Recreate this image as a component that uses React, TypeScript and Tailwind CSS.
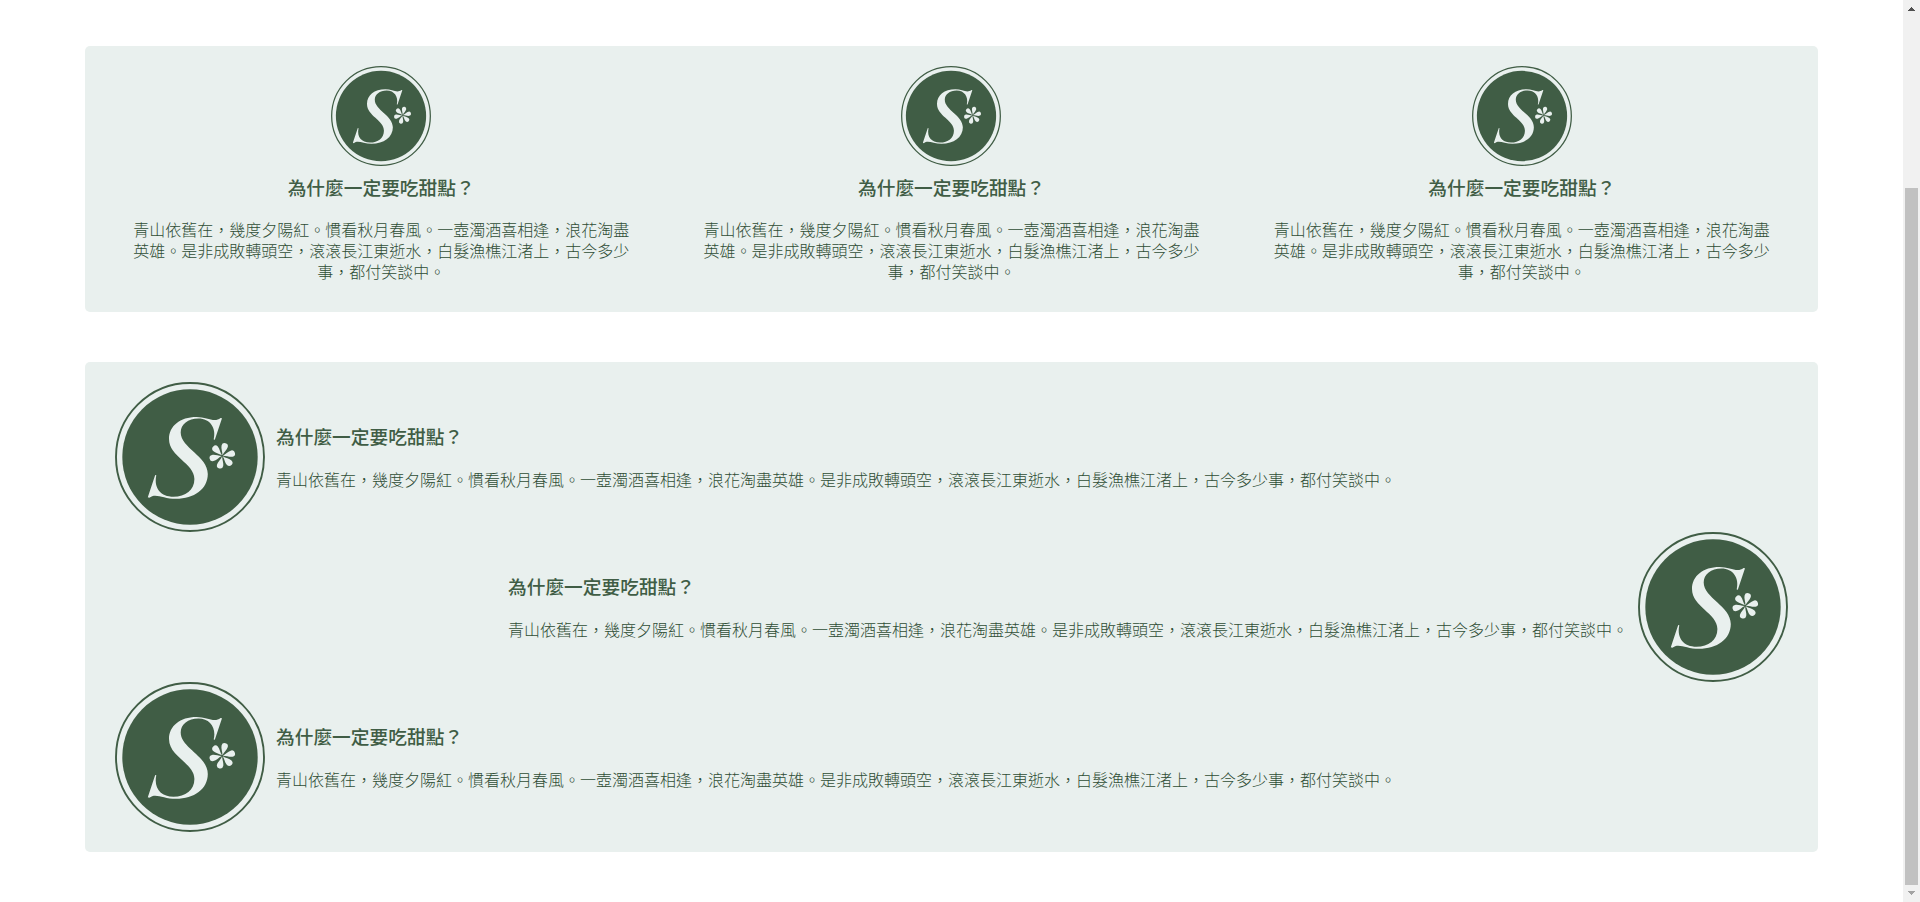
const TITLE = "為什麼一定要吃甜點？";
const BODY =
  "青山依舊在，幾度夕陽紅。慣看秋月春風。一壺濁酒喜相逢，浪花淘盡英雄。是非成敗轉頭空，滾滾長江東逝水，白髮漁樵江渚上，古今多少事，都付笑談中。";

const PETALS = [14, 77, 135, 193, 257, 316];

function Logo({ className }: { className: string }) {
  return (
    <svg viewBox="0 0 150 150" className={className} aria-hidden="true">
      <circle cx="75" cy="75" r="74" fill="none" stroke="#405d45" strokeWidth="1.9" />
      <circle cx="75" cy="75" r="67.7" fill="#405d45" />
      <path
        fill="#e9f0ee"
        d="M107 36.3 L99.8 57.8 L98.7 57.6 C101.5 46 95 36.6 83.5 36.6 C73 36.6 65.7 42.5 65.7 50.5 C65.7 66 92.8 74 92.8 92 C92.8 107 79 116.8 61 116.8 C48 116.8 40.5 110.5 34.3 115.8 L32.8 115.3 L40.2 93 L41.3 93.3 C38.5 106.5 46 114.8 58.5 114.8 C70.5 114.8 79.4 108 79.4 97 C79.4 81 54 75 54 57 C54 44 65 35 81.5 35 C92 35 99.5 41.2 105.5 36 Z"
      />
      <g transform="translate(107.3 73.8)" fill="#e9f0ee">
        {PETALS.map((a) => (
          <path
            key={a}
            transform={`rotate(${a})`}
            d="M0 -0.6 C-0.7 -4 -3.2 -6.8 -3.2 -9.8 A3.2 3.2 0 0 1 3.2 -9.8 C3.2 -6.8 0.7 -4 0 -0.6 Z"
          />
        ))}
      </g>
    </svg>
  );
}

function Column() {
  return (
    <div className="flex flex-1 flex-col items-center">
      <Logo className="size-[100px]" />
      <h3 className="mt-[8px] text-[18.72px] leading-[25px] font-medium">{TITLE}</h3>
      <p className="mt-[20px] w-[500px] text-center text-base leading-[21px] font-light text-[#2f4d35]">{BODY}</p>
    </div>
  );
}

function Row({ reverse = false }: { reverse?: boolean }) {
  return (
    <div className={reverse ? "flex flex-row-reverse items-center" : "flex items-center"}>
      <Logo className="size-[150px] shrink-0" />
      <div className="pr-[10px] pb-[2px] pl-[11px]">
        <h3 className="text-[18.72px] leading-[25px] font-medium">{TITLE}</h3>
        <p className="mt-[21px] text-base leading-[21px] font-light whitespace-nowrap text-[#2f4d35]">{BODY}</p>
      </div>
    </div>
  );
}

export default function App() {
  return (
    <div
      lang="zh-Hant"
      className="flex h-[902px] overflow-hidden bg-white font-['Noto_Sans_CJK_TC',sans-serif] text-[#405d45]"
    >
      <main className="flex flex-1 flex-col gap-[50px] pt-[46px] pr-[85px] pl-[85px]">
        <section className="flex h-[266px] rounded-[5px] bg-[#e9f0ee] px-[11px] pt-5">
          <Column />
          <Column />
          <Column />
        </section>
        <section className="h-[490px] rounded-[5px] bg-[#e9f0ee] px-[30px] py-5">
          <Row />
          <Row reverse />
          <Row />
        </section>
      </main>
      <div className="flex w-[17px] flex-col items-center bg-[#f1f1f1]">
        <svg viewBox="0 0 17 17" className="h-[17px] w-[17px]" shapeRendering="crispEdges">
          <path d="M5 11h7v-1h-1v-1h-1v-1h-1v-1h-1v1h-1v1h-1v1h-1z" fill="#505050" />
        </svg>
        <div className="mt-[171px] h-[697px] w-[13px] bg-[#c1c1c1]" />
        <svg viewBox="0 0 17 17" className="h-[17px] w-[17px]" shapeRendering="crispEdges">
          <path d="M5 6h7v1h-1v1h-1v1h-1v1h-1v-1h-1v-1h-1v-1h-1z" fill="#a3a3a3" />
        </svg>
      </div>
    </div>
  );
}
